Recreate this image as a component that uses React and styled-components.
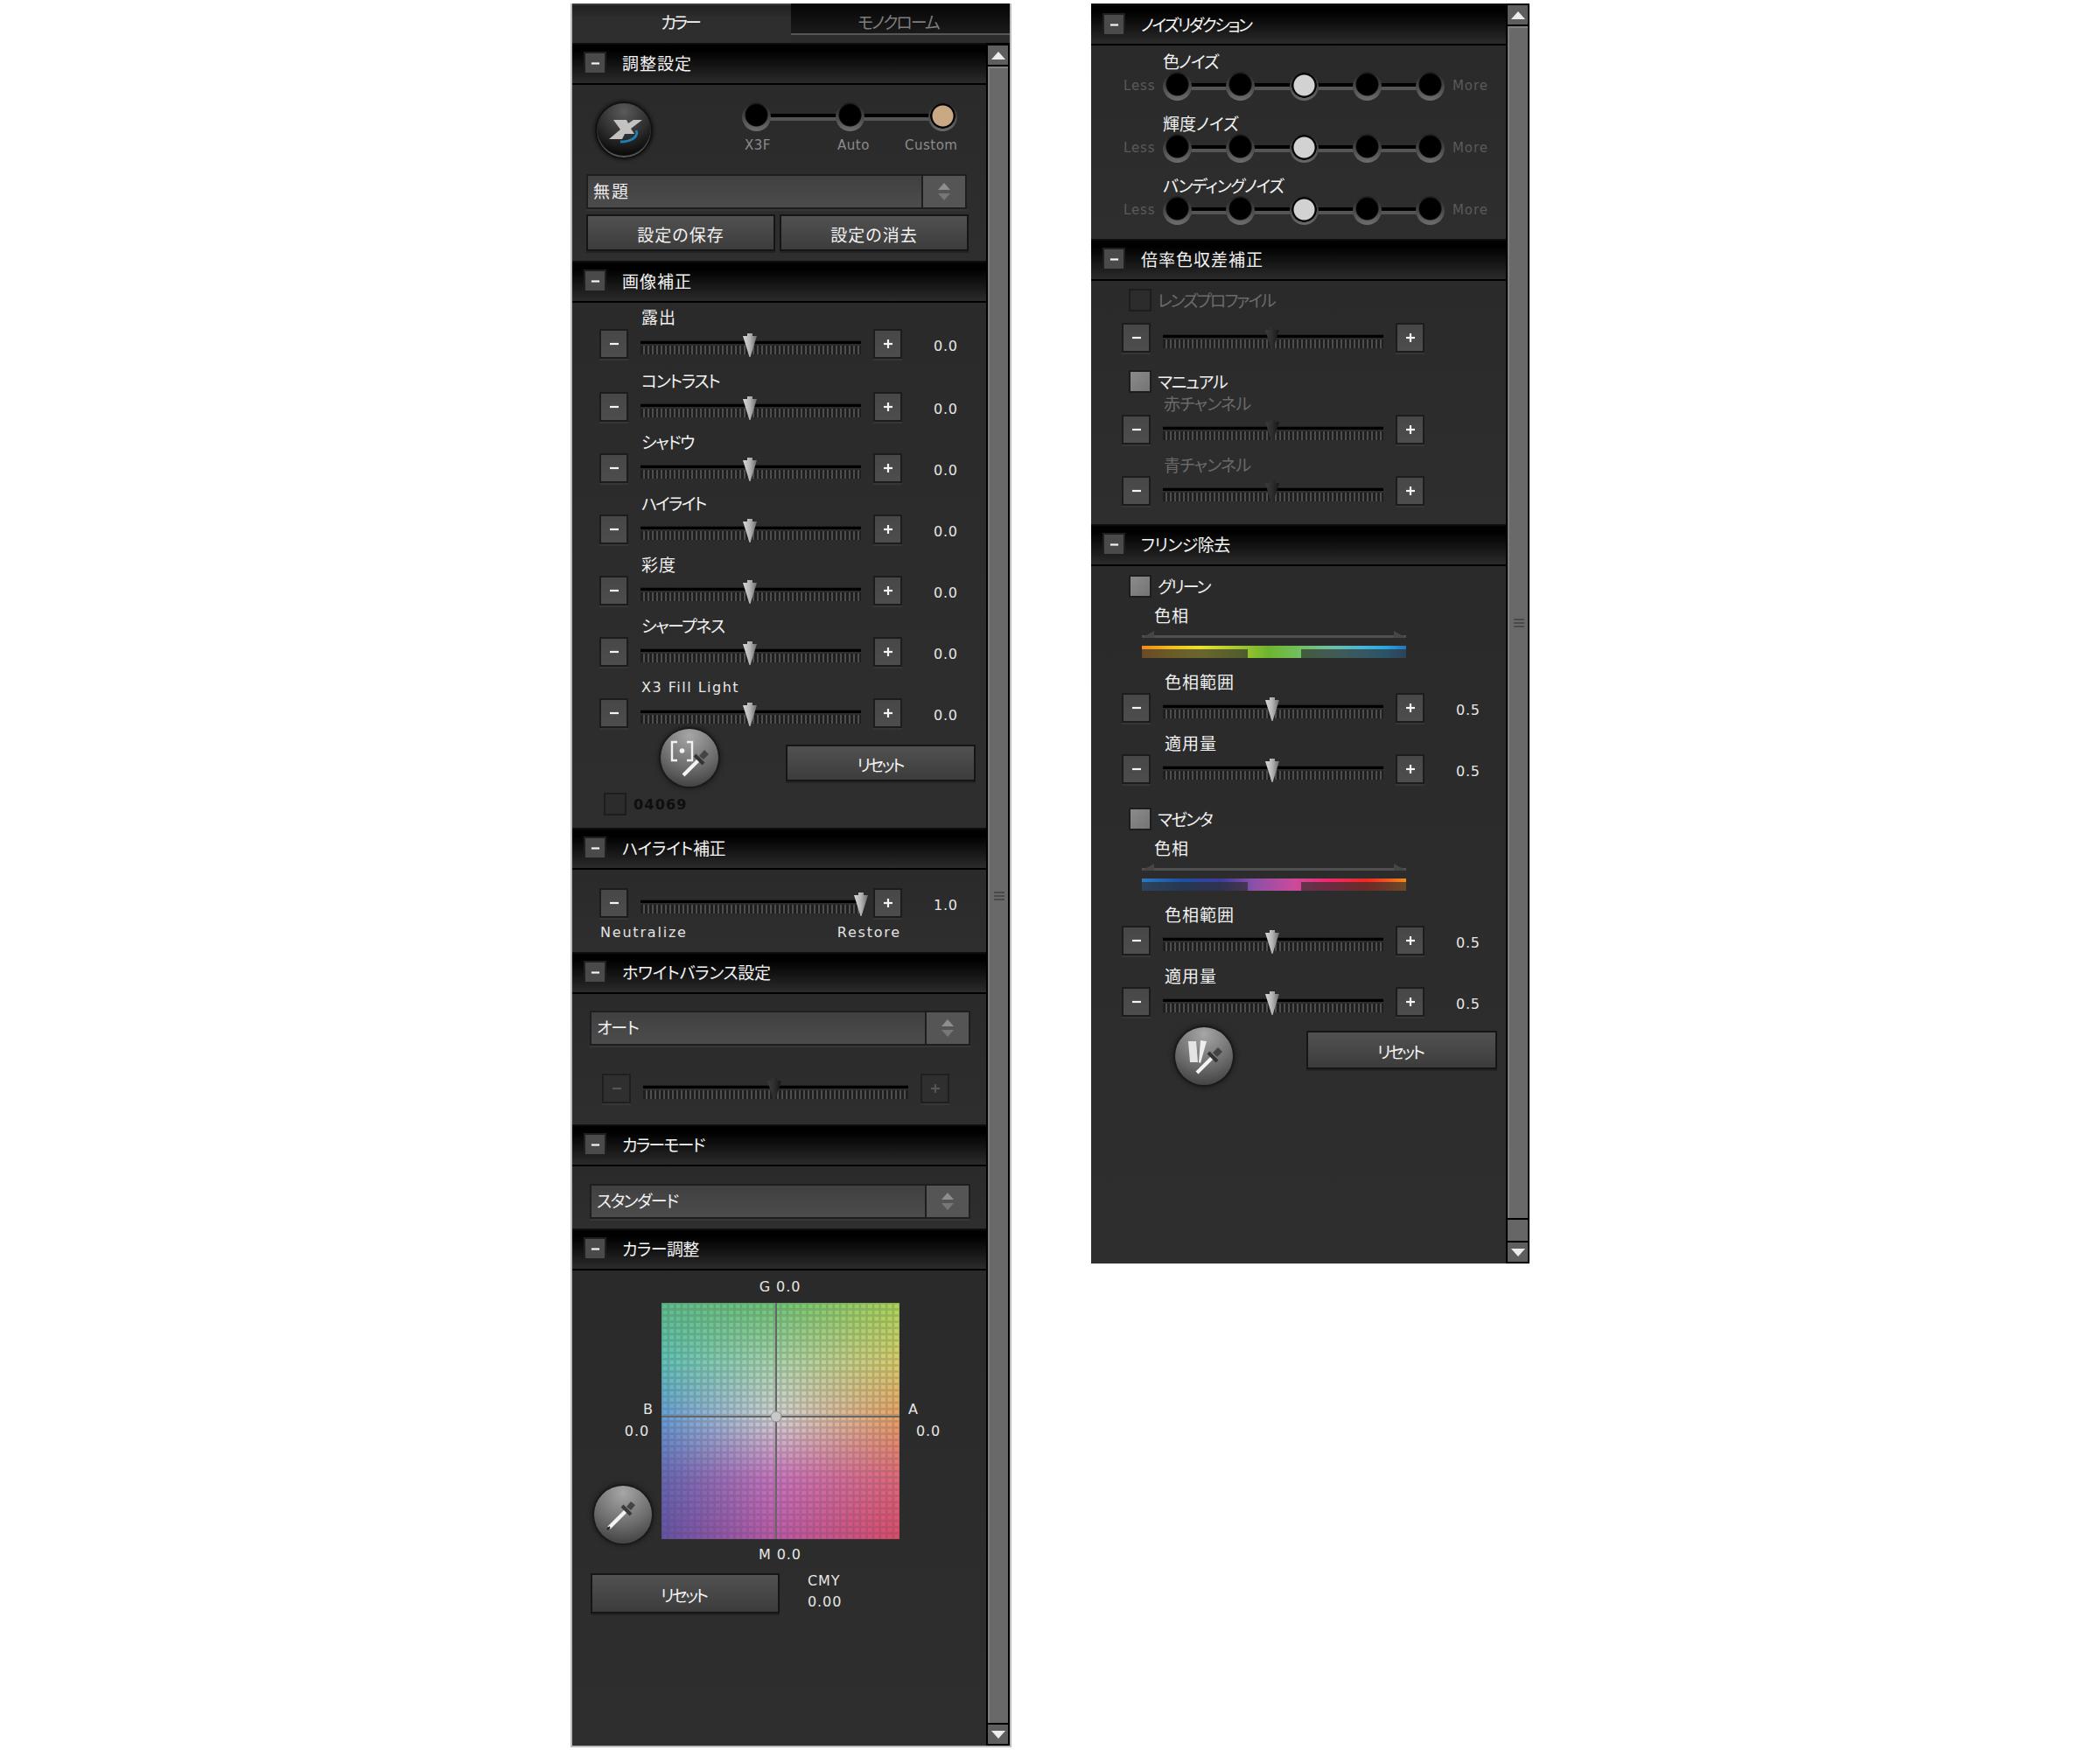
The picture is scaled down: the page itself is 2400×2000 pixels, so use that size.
import React, { useMemo } from "react";
import styled, { createGlobalStyle, css } from "styled-components";

const Global = createGlobalStyle`
  html, body { margin: 0; padding: 0; background: #fff; }
  body { font-family: "Noto Sans CJK JP", "DejaVu Sans", sans-serif; }
  * { box-sizing: border-box; }
`;

const Page = styled.div`
  display: flex;
  align-items: flex-start;
  gap: 91px;
  padding: 4px 0 0 652px;
  width: 2400px;
  height: 2000px;
`;
const LeftPanel = styled.div`
  width: 504px;
  height: 1993px;
  border: solid #bcbcbc;
  border-width: 0 2px 2px 2px;
  display: flex;
  flex-direction: column;
  background: #2c2c2c;
`;
const RightPanel = styled.div`
  width: 501px;
  height: 1440px;
  display: flex;
  background: #2c2d2c;
`;
const Tabs = styled.div`
  display: flex;
  height: 45px;
  flex: none;
`;
const Tab = styled.div`
  height: 45px;
  display: flex;
  align-items: flex-start;
  justify-content: center;
  font-size: 19px;
  line-height: 24px;
  padding-top: 9px;
  font-feature-settings: "palt";
  ${p => p.$active ? css`
    width: 250px;
    background: linear-gradient(#1f1f1f, #2e2e2e 35%);
    border-top: 2px solid #3a3a3a;
    color: #f2f2f2;
    padding-top: 7px;
    padding-right: 4px;
  ` : css`
    flex: 1;
    color: #7d7d7d;
    padding-right: 5px;
    background: linear-gradient(#050505 0, #1a1a1a 34px, #565656 34px, #565656 36px, #2c2c2c 36px);
  `}
  letter-spacing: ${p => p.$ls}px;
`;
const PanelBody = styled.div`
  flex: 1;
  display: flex;
  min-height: 0;
`;
const Main = styled.div`
  width: ${p => p.$w}px;
  flex: none;
  display: flex;
  flex-direction: column;
`;
const Scroll = styled.div`
  width: 27px;
  flex: none;
  background: #000;
  display: flex;
  flex-direction: column;
  padding: ${p => p.$top}px 2px 2px 2px;
  gap: 2px;
`;
const ScrollArrow = styled.div`
  height: 22px;
  flex: none;
  background: #5e5e5e;
  display: flex;
  align-items: center;
  justify-content: center;
`;
const ScrollThumb = styled.div`
  flex: 1;
  background: #696969;
  border-left: 2px solid #7e7e7e;
  border-top: 2px solid #828282;
  display: flex;
  align-items: center;
  justify-content: center;
`;
const Grip = styled.div`
  width: 12px;
  height: 10px;
  background: repeating-linear-gradient(#4a4a4a 0 2px, transparent 2px 4px);
`;
const ScrollTail = styled.div`
  height: 24px;
  flex: none;
  background: #666;
`;

const SectionHead = styled.div`
  height: 48px;
  flex: none;
  display: flex;
  align-items: center;
  padding-left: 13px;
  padding-top: ${p => p.$pt || 0}px;
  border-bottom: 2px solid #000;
  background: linear-gradient(#141414 0, #000 3px, #000 9px, #2b2b2b 100%);
`;
const Collapse = styled.div`
  width: 26px;
  height: 26px;
  flex: none;
  background: #4a4a4a;
  border: 2px solid #1f1f1f;
  display: flex;
  align-items: center;
  justify-content: center;
`;
const HeadTitle = styled.div`
  margin-left: 18px;
  color: #f4f4f4;
  font-size: 19px;
  line-height: 24px;
  font-feature-settings: "palt";
  white-space: nowrap;
  letter-spacing: ${p => p.$ls}px;
`;
const SectionBody = styled.div`
  height: ${p => p.$h ? p.$h + "px" : "auto"};
  ${p => !p.$h && "flex: 1;"}
  flex-shrink: 0;
  background: linear-gradient(#2a2a2a, #2e2e2e);
  display: flex;
  flex-direction: column;
  align-items: flex-start;
`;

const TopRow = styled.div`
  display: flex;
  padding: 19px 0 0 26px;
  height: 85px;
`;
const Knob = styled.div`
  width: 66px;
  height: 66px;
  border-radius: 50%;
  flex: none;
  background: radial-gradient(circle at 50% 15%, #5a5a5a, #2c2c2c 50%, #050505 85%);
  border: 2px solid #111;
  box-shadow: inset 0 -2px 1px #5c5c5c, 0 0 3px 2px #1d1d1d;
`;
const RadioWrap = styled.div`
  margin-left: 103px;
  padding-top: 2px;
  width: 260px;
`;
const DotTrack = styled.div`
  position: relative;
  display: flex;
  justify-content: space-between;
  width: ${p => p.$w}px;
  height: 31px;
  flex: none;
  &::before {
    content: "";
    position: absolute;
    left: 10px;
    right: 10px;
    top: 12px;
    height: 8px;
    background: linear-gradient(#000 0 4px, #555 4px);
  }
`;
const Dot = styled.div`
  position: relative;
  width: 33px;
  height: 33px;
  margin: -1px;
  flex: none;
  border-radius: 50%;
  background: ${p => p.$color
    ? `radial-gradient(circle at 50% 47%, ${p.$color} 0 11.5px, #050505 12.5px 14px, transparent 14.5px), linear-gradient(#262626, #6a6a6a)`
    : `radial-gradient(circle at 50% 44%, #000 0 11.5px, #0b0b0b 12.5px, transparent 13.5px), linear-gradient(#202020, #6e6e6e)`};
`;
const RadioLabels = styled.div`
  display: flex;
  margin: 8px 0 0 2px;
`;
const RadioLabel = styled.div`
  width: ${p => p.$w}px;
  font-family: "DejaVu Sans", sans-serif;
  font-size: 15px;
  line-height: 18px;
  color: #8b8b8b;
  letter-spacing: 0.5px;
`;

const SelectBox = styled.div`
  display: flex;
  margin: ${p => p.$mt}px 0 0 ${p => p.$x}px;
  width: 435px;
  height: 40px;
  flex: none;
  border: 2px solid #1e1e1e;
  box-shadow: 0 2px 0 #363636;
  background: #1e1e1e;
`;
const SelectText = styled.div`
  flex: 1;
  background: linear-gradient(#404040, #4c4c4c);
  color: #f0f0f0;
  font-size: 19px;
  line-height: 34px;
  padding-left: ${p => p.$pad}px;
  font-feature-settings: "palt";
  letter-spacing: ${p => p.$ls}px;
`;
const SelectArrow = styled.div`
  width: 48px;
  margin-left: 2px;
  background: #555;
  display: flex;
  align-items: center;
  justify-content: center;
`;
const ButtonRow = styled.div`
  display: flex;
  gap: 5px;
  margin: 6px 0 0 16px;
`;
const TextButton = styled.div`
  width: ${p => p.$w || 217}px;
  height: ${p => p.$h || 42}px;
  flex: none;
  margin-top: ${p => p.$mt || 0}px;
  border: 2px solid #151515;
  background: linear-gradient(#515151, #3c3c3c);
  box-shadow: 0 2px 0 #232323;
  color: #f2f2f2;
  font-size: 19px;
  font-feature-settings: "palt";
  letter-spacing: ${p => p.$ls}px;
  display: flex;
  align-items: center;
  justify-content: center;
  padding: 3px ${p => p.$pr || 0}px 0 0;
`;

const LabelRow = styled.div`
  height: ${p => p.$h}px;
  flex: none;
  display: flex;
  align-items: flex-end;
  padding: 0 0 ${p => p.$pb ?? 3}px ${p => p.$x}px;
  color: ${p => p.$dim ? "#6a6a6a" : "#f2f2f2"};
  font-size: 19px;
  line-height: 20px;
  font-feature-settings: "palt";
  white-space: nowrap;
  letter-spacing: ${p => p.$ls}px;
`;
const LatinLabel = styled.span`
  font-family: "DejaVu Sans", sans-serif;
  font-size: 16px;
  letter-spacing: 1.5px;
  color: #e8e8e8;
`;
const SliderRow = styled.div`
  display: flex;
  height: 34px;
  flex: none;
  padding-left: ${p => p.$x}px;
  margin-top: ${p => p.$mt || 0}px;
`;
const MiniBtn = styled.div`
  width: 33px;
  height: 34px;
  flex: none;
  background: linear-gradient(#474747, #4d4d4d);
  border: 2px solid ${p => p.$dim ? "#1f1f1f" : "#1c1c1c"};
  box-shadow: 0 2px 0 #363636;
  display: flex;
  align-items: center;
  justify-content: center;
  ${p => p.$dim && "background: #2f2f2f;"}
`;
const Track = styled.div`
  position: relative;
  width: ${p => p.$w || 252}px;
  height: 34px;
  margin: 0 14px;
  flex: none;
  &::before {
    content: "";
    position: absolute;
    left: 0; right: 0; top: 13px;
    height: 4px;
    background: linear-gradient(#1f1f1f 0 1px, #000 1px);
  }
  &::after {
    content: "";
    position: absolute;
    left: 0; right: 0; top: 19px;
    height: 10px;
    background: repeating-linear-gradient(90deg, #1f1f1f 0 3px, #4e4e4e 3px 5px);
  }
`;
const ThumbWrap = styled.div`
  position: absolute;
  top: 5px;
  width: 16px;
  height: 27px;
  margin-left: -8px;
  z-index: 2;
`;
const Value = styled.div`
  margin: 6px 0 0 36px;
  font-family: "DejaVu Sans", sans-serif;
  font-size: 16px;
  line-height: 28px;
  letter-spacing: 0.8px;
  color: #e6e6e6;
`;
const FootRow = styled.div`
  display: flex;
  padding-left: ${p => p.$x}px;
  margin-top: ${p => p.$mt}px;
  gap: ${p => p.$gap}px;
`;
const RoundBtn = styled.div`
  width: 66px;
  height: 66px;
  flex: none;
  border-radius: 50%;
  background: radial-gradient(circle at 50% 12%, #a6a6a6, #6c6c6c 55%, #3a3a3a 95%);
  box-shadow: 0 0 0 2px #1a1a1a, 0 0 5px 3px #1d1d1d;
`;
const CheckRow = styled.div`
  display: flex;
  align-items: center;
  margin: ${p => p.$mt}px 0 0 ${p => p.$x}px;
  height: 26px;
  flex: none;
  font-size: 19px;
  line-height: 26px;
  font-feature-settings: "palt";
  color: ${p => p.$dim ? "#6a6a6a" : "#f0f0f0"};
  letter-spacing: ${p => p.$ls}px;
  white-space: nowrap;
`;
const CheckBox = styled.div`
  width: 26px;
  height: 26px;
  flex: none;
  margin-right: ${p => p.$gap || 7}px;
  border: 2px solid #1d1d1d;
  background: ${p => p.$on ? "linear-gradient(135deg,#8a8a8a,#747474)" : "#2c2c2c"};
`;
const CodeText = styled.div`
  font-family: "DejaVu Sans", sans-serif;
  font-weight: 700;
  font-size: 16px;
  letter-spacing: 1.2px;
  color: #0e0e0e;
  padding-top: 2px;
`;
const Neutral = styled.div`
  display: flex;
  margin: 7px 0 0 32px;
  width: 344px;
  justify-content: space-between;
  font-family: "DejaVu Sans", sans-serif;
  font-size: 16px;
  line-height: 20px;
  letter-spacing: 1.8px;
  color: #e2e2e2;
`;
const NoiseRow = styled.div`
  display: flex;
  height: 31px;
  flex: none;
  padding-left: 37px;
`;
const Faint = styled.div`
  width: ${p => p.$w}px;
  margin-left: ${p => p.$ml || 0}px;
  flex: none;
  font-family: "DejaVu Sans", sans-serif;
  font-size: 15px;
  line-height: 31px;
  color: #5a5a5a;
  letter-spacing: 0.9px;
`;

const ColorArea = styled.div`
  display: grid;
  grid-template-columns: 102px 272px 98px;
  grid-template-rows: 20px 270px 20px;
  margin-top: 9px;
`;
const AxisText = styled.div`
  font-family: "DejaVu Sans", sans-serif;
  font-size: 16px;
  line-height: 20px;
  letter-spacing: 0.9px;
  color: #e6e6e6;
  white-space: nowrap;
  text-align: ${p => p.$align || "left"};
  padding-left: ${p => p.$pl || 0}px;
  padding-right: ${p => p.$pr || 0}px;
  margin-top: ${p => p.$mt || 0}px;
`;
const GridTop = styled(AxisText)`
  grid-column: 2;
  text-align: center;
  padding-right: 1px;
  margin-top: 0;
`;
const SideCell = styled.div`
  height: 270px;
  padding-top: 110px;
  grid-row: 2;
  margin-top: 10px;
`;
const GridSvg = styled.svg`
  grid-column: 2;
  grid-row: 2;
  display: block;
  margin-top: 8px;
`;
const GridBottom = styled(AxisText)`
  grid-column: 2;
  grid-row: 3;
  text-align: center;
  padding-right: 1px;
  margin-top: 16px;
`;
const DropWrap = styled.div`
  margin: 52px 0 0 25px;
  width: 66px;
`;
const CmyRow = styled.div`
  display: flex;
  margin: 27px 0 0 21px;
  gap: 32px;
`;
const CmyCol = styled.div`
  display: flex;
  flex-direction: column;
  gap: 4px;
  margin-top: -1px;
`;
const NameText = styled.div`
  margin-left: ${p => p.$x}px;
  margin-top: ${p => p.$mt}px;
  height: 20px;
  flex: none;
  font-size: 19px;
  line-height: 20px;
  letter-spacing: 1px;
  color: #f2f2f2;
`;
const Rail = styled.div`
  width: 302px;
  height: 10px;
  margin: 7px 0 0 58px;
  flex: none;
  svg { display: block; }
`;
const HueBar = styled.div`
  position: relative;
  width: 302px;
  height: 14px;
  margin: 8px 0 0 58px;
  flex: none;
  background: ${p => p.$bg};
`;
const HueDim = styled.div`
  position: absolute;
  top: 4px;
  bottom: 0;
  ${p => p.$left ? "left: 0; width: 121px;" : "right: 0; width: 120px;"}
  background: rgba(44, 44, 44, 0.68);
`;

/* ---------- drawings ---------- */
const Sign = ({ plus, color = "#f4f4f4", size = 12, w = 2.2 }) => (
  <svg width={size} height={size} viewBox="0 0 12 12">
    <path d="M1 6H11" stroke={color} strokeWidth={w} />
    {plus && <path d="M6 1V11" stroke={color} strokeWidth={w} />}
  </svg>
);
const UpDown = () => (
  <svg width="16" height="22" viewBox="0 0 16 22">
    <path d="M8 1L15 9H1Z" fill="#8e8e8e" />
    <path d="M8 21L15 13H1Z" fill="#777" />
  </svg>
);
const Tri = ({ up }) => (
  <svg width="16" height="9" viewBox="0 0 16 9">
    <path d={up ? "M8 0L16 9H0Z" : "M8 9L16 0H0Z"} fill="#ececec" />
  </svg>
);
const Thumb = ({ dim }) => (
  <svg width="16" height="27" viewBox="0 0 16 27">
    <defs>
      <linearGradient id={dim ? "thd" : "thl"} x1="0" x2="1" y1="0" y2="0">
        <stop offset="0" stopColor={dim ? "#3c3c3c" : "#d8d8d8"} />
        <stop offset="0.5" stopColor={dim ? "#2d2d2d" : "#b4b4b4"} />
        <stop offset="1" stopColor={dim ? "#161616" : "#6a6a6a"} />
      </linearGradient>
    </defs>
    <path d="M5 0H11V3H16L8.5 27H7.5L0 3H5Z" fill={dim ? "url(#thd)" : "url(#thl)"} />
  </svg>
);
const X3Logo = () => (
  <svg width="62" height="62" viewBox="0 0 62 62">
    <path d="M19 19H34L36 23L42 19H52L39 29L43 35H32L29 41H14L27 30Z" fill="#c2c2c2" />
    <path d="M45 31C48 38 40 44 27 44" stroke="#1f7fb6" strokeWidth="2.8" fill="none" />
  </svg>
);
const DropperIcon = () => (
  <svg width="66" height="66" viewBox="0 0 66 66">
    <path d="M17 48L37 28" stroke="#f4f4f4" strokeWidth="4.5" />
    <path d="M15 50L18 47" stroke="#222" strokeWidth="2" />
    <path d="M32 23L42 33" stroke="#3a3a3a" strokeWidth="4" />
    <path d="M37 24L42 18L47 22L42 28Z" fill="#444" />
  </svg>
);
const PointIcon = () => (
  <svg width="66" height="66" viewBox="0 0 66 66">
    <path d="M19 15H13V36H19M30 15H36V36H30" stroke="#f2f2f2" strokeWidth="2.4" fill="none" />
    <circle cx="24.5" cy="25" r="2.8" fill="#f2f2f2" />
    <path d="M26 53L44 35" stroke="#f4f4f4" strokeWidth="4" />
    <path d="M39 30L49 40" stroke="#333" strokeWidth="4" />
    <path d="M44 31L50 24L55 29L49 35Z" fill="#444" />
  </svg>
);
const BarsIcon = () => (
  <svg width="66" height="66" viewBox="0 0 66 66">
    <path d="M15 16H24L26 40H17Z" fill="#e4e4e4" />
    <path d="M29 15L36 16L29 41L27 40Z" fill="#efefef" />
    <path d="M25 52L43 34" stroke="#f4f4f4" strokeWidth="4" />
    <path d="M38 29L48 39" stroke="#333" strokeWidth="4" />
    <path d="M43 29L49 23L54 28L48 34Z" fill="#444" />
  </svg>
);
const RailShape = () => (
  <svg width="302" height="10" viewBox="0 0 302 10">
    <rect x="0" y="6" width="302" height="3" fill="#505050" />
    <path d="M0 9L14 1V9ZM288 1L302 9H288Z" fill="#464646" />
  </svg>
);

const MIX = (a, b, t) => a.map((v, i) => v + (b[i] - v) * t);
const hex = h => [parseInt(h.slice(0, 2), 16), parseInt(h.slice(2, 4), 16), parseInt(h.slice(4, 6), 16)];
const COLORS = [
  ["54b983", "64c06c", "a4d24e"],
  ["55c1b2", "a3d3a6", "d6cb62"],
  ["5c98d6", "d2d2d2", "e89c5a"],
  ["5e5eb2", "c86cbc", "e05f72"],
  ["5b47a3", "b94fa3", "dc4062"],
].map(r => r.map(hex));
function colorAt(x, y) {
  const cx = 131, cy = 130;
  const u = x < cx ? x / cx : (x - cx) / (272 - cx);
  const v4 = y < cy ? (y / cy) * 2 : 2 + ((y - cy) / (270 - cy)) * 2;
  const j = Math.min(3, Math.floor(v4));
  const v = v4 - j;
  const i = x < cx ? 0 : 1;
  const top = MIX(COLORS[j][i], COLORS[j][i + 1], u);
  const bot = MIX(COLORS[j + 1][i], COLORS[j + 1][i + 1], u);
  return MIX(top, bot, v);
}
const rgb = c => `rgb(${c.map(Math.round).join(",")})`;
const ColorGrid = () => {
  const cells = useMemo(() => {
    const out = [];
    const px = 272 / 36;
    const py = 270 / 38;
    for (let r = 0; r < 38; r++) {
      for (let c = 0; c < 36; c++) {
        const col = colorAt(c * px + px / 2, r * py + py / 2);
        out.push(
          <rect key={`b${r}-${c}`} x={c * px} y={r * py} width={px + 0.5} height={py + 0.5}
            fill={rgb(MIX(col, [100, 100, 100], 0.26))} shapeRendering="crispEdges" />,
          <rect key={`f${r}-${c}`} x={c * px + 1.6} y={r * py + 1.6} width={px - 2.6} height={py - 2.6}
            fill={rgb(MIX(col, [255, 255, 255], 0.05))} />
        );
      }
    }
    return out;
  }, []);
  return (
    <GridSvg width="272" height="270" viewBox="0 0 272 270">
      {cells}
      <rect x="130" y="0" width="2" height="270" fill="#666" />
      <rect x="0" y="129" width="272" height="2" fill="#666" />
      <circle cx="131" cy="130" r="6" fill="#c8c8c8" stroke="#8c8c8c" strokeWidth="1" />
    </GridSvg>
  );
};

/* ---------- parts ---------- */
const Section = ({ title, ls, h, pt, children }) => (
  <>
    <SectionHead $pt={pt}>
      <Collapse><Sign size={11} w={2.4} /></Collapse>
      <HeadTitle $ls={ls}>{title}</HeadTitle>
    </SectionHead>
    <SectionBody $h={h}>{children}</SectionBody>
  </>
);
const Select = ({ text, ls, x, mt, pad = 6 }) => (
  <SelectBox $x={x} $mt={mt}>
    <SelectText $ls={ls} $pad={pad}>{text}</SelectText>
    <SelectArrow><UpDown /></SelectArrow>
  </SelectBox>
);
const Slider = ({ x, value, pos = 49.5, dim, w, mt, dimIcons }) => (
  <SliderRow $x={x} $mt={mt}>
    <MiniBtn $dim={dimIcons}><Sign color={dimIcons ? "#555" : "#f4f4f4"} /></MiniBtn>
    <Track $w={w}>
      <ThumbWrap style={{ left: `${pos}%` }}><Thumb dim={dim} /></ThumbWrap>
    </Track>
    <MiniBtn $dim={dimIcons}><Sign plus color={dimIcons ? "#555" : "#f4f4f4"} /></MiniBtn>
    {value && <Value>{value}</Value>}
  </SliderRow>
);
const Labeled = ({ label, ls, h = 36, x = 79, value, latin, dim, thumbDim, sx = 31, pb }) => (
  <>
    <LabelRow $h={h} $x={x} $ls={ls} $dim={dim} $pb={pb}>
      {latin ? <LatinLabel>{label}</LatinLabel> : label}
    </LabelRow>
    <Slider x={sx} value={value} dim={thumbDim} />
  </>
);
const Dots = ({ w, n = 5, active }) => (
  <DotTrack $w={w}>
    {Array.from({ length: n }).map((_, i) => (
      <Dot key={i} $color={i === active ? (n === 3 ? "#c9a984" : "#d2d2d2") : null} />
    ))}
  </DotTrack>
);
const Noise = ({ label, ls, h }) => (
  <>
    <LabelRow $h={h} $x={82} $ls={ls} $pb={3}>{label}</LabelRow>
    <NoiseRow>
      <Faint $w={46}>Less</Faint>
      <Dots w={320} active={2} />
      <Faint $w={54} $ml={10}>More</Faint>
    </NoiseRow>
  </>
);
const HUE_G = "linear-gradient(90deg,#f08a1c,#f0c020 12%,#ece030 22%,#a8c830 36%,#6db52f 48%,#72c060 60%,#6fbfa8 72%,#48b4d8 84%,#2aa8e0 92%,#2a72b8)";
const HUE_M = "linear-gradient(90deg,#2a7abf,#1c50a0 15%,#3c3c9c 30%,#8a50a8 42%,#cc4a9a 58%,#ee2a70 70%,#ee2a20 85%,#ef5020 92%,#f08a1c)";
const Hue = ({ bg }) => (
  <>
    <Rail><RailShape /></Rail>
    <HueBar $bg={bg}>
      <HueDim $left />
      <HueDim />
    </HueBar>
  </>
);

export default function App() {
  return (
    <>
      <Global />
      <Page>
        <LeftPanel>
          <Tabs>
            <Tab $active $ls={-3}>カラー</Tab>
            <Tab $ls={-2}>モノクローム</Tab>
          </Tabs>
          <PanelBody>
            <Main $w={473}>
              <Section title="調整設定" ls={1} h={201}>
                <TopRow>
                  <Knob><X3Logo /></Knob>
                  <RadioWrap>
                    <Dots w={244} n={3} active={2} />
                    <RadioLabels>
                      <RadioLabel $w={106}>X3F</RadioLabel>
                      <RadioLabel $w={77}>Auto</RadioLabel>
                      <RadioLabel $w={70}>Custom</RadioLabel>
                    </RadioLabels>
                  </RadioWrap>
                </TopRow>
                <Select text="無題" ls={2} x={16} mt={17} pad={6} />
                <ButtonRow>
                  <TextButton $w={216} $ls={1}>設定の保存</TextButton>
                  <TextButton $w={216} $ls={1}>設定の消去</TextButton>
                </ButtonRow>
              </Section>
              <Section title="画像補正" ls={1} h={600}>
                <Labeled label="露出" ls={1} h={30} value="0.0" pb={4} />
                <Labeled label="コントラスト" ls={-1.3} h={38} value="0.0" />
                <Labeled label="シャドウ" ls={-1.3} value="0.0" />
                <Labeled label="ハイライト" ls={-1.8} value="0.0" />
                <Labeled label="彩度" ls={1} value="0.0" />
                <Labeled label="シャープネス" ls={-1.5} value="0.0" />
                <Labeled label="X3 Fill Light" latin value="0.0" pb={2} />
                <FootRow $x={101} $mt={1} $gap={77}>
                  <RoundBtn><PointIcon /></RoundBtn>
                  <TextButton $mt={18} $ls={-2.7} $pr={2}>リセット</TextButton>
                </FootRow>
                <CheckRow $x={36} $mt={7}>
                  <CheckBox $gap={8} />
                  <CodeText>04069</CodeText>
                </CheckRow>
              </Section>
              <Section title="ハイライト補正" ls={-0.3} h={94}>
                <Slider x={31} value="1.0" pos={100} mt={21} />
                <Neutral><span>Neutralize</span><span>Restore</span></Neutral>
              </Section>
              <Section title="ホワイトバランス設定" ls={-0.3} h={149}>
                <Select text="オート" ls={-1} x={20} mt={19} />
                <Slider x={34} w={303} pos={49.5} dim dimIcons mt={32} />
              </Section>
              <Section title="カラーモード" ls={-1.8} h={71}>
                <Select text="スタンダード" ls={-1.5} x={20} mt={20} />
              </Section>
              <Section title="カラー調整" ls={-0.6}>
                <ColorArea>
                  <GridTop>G 0.0</GridTop>
                  <SideCell>
                    <AxisText $align="right" $pr={9}>B</AxisText>
                    <AxisText $align="right" $pr={14} $mt={5}>0.0</AxisText>
                    <DropWrap><RoundBtn><DropperIcon /></RoundBtn></DropWrap>
                  </SideCell>
                  <ColorGrid />
                  <SideCell>
                    <AxisText $pl={10}>A</AxisText>
                    <AxisText $pl={19} $mt={5}>0.0</AxisText>
                  </SideCell>
                  <GridBottom>M 0.0</GridBottom>
                </ColorArea>
                <CmyRow>
                  <TextButton $h={46} $w={216} $ls={-2.7} $pr={4}>リセット</TextButton>
                  <CmyCol>
                    <AxisText>CMY</AxisText>
                    <AxisText>0.00</AxisText>
                  </CmyCol>
                </CmyRow>
              </Section>
            </Main>
            <Scroll $top={3}>
              <ScrollArrow><Tri up /></ScrollArrow>
              <ScrollThumb><Grip /></ScrollThumb>
              <ScrollArrow><Tri /></ScrollArrow>
            </Scroll>
          </PanelBody>
        </LeftPanel>

        <RightPanel>
          <Main $w={474}>
            <Section title="ノイズリダクション" ls={-2.4} h={221} pt={2}>
              <Noise label="色ノイズ" ls={-1} h={31} />
              <Noise label="輝度ノイズ" ls={0} h={40} />
              <Noise label="バンディングノイズ" ls={-1.3} h={40} />
            </Section>
            <Section title="倍率色収差補正" ls={1} h={278}>
              <CheckRow $x={43} $mt={9} $dim $ls={-2.1}>
                <CheckBox />レンズプロファイル
              </CheckRow>
              <Slider x={35} dim mt={13} />
              <CheckRow $x={43} $mt={20} $ls={-1.2}>
                <CheckBox $on />マニュアル
              </CheckRow>
              <Labeled label="赤チャンネル" ls={-0.8} h={25} x={83} dim thumbDim sx={35} />
              <Labeled label="青チャンネル" ls={-0.8} x={83} dim thumbDim sx={35} />
            </Section>
            <Section title="フリンジ除去" ls={-0.5}>
              <CheckRow $x={43} $mt={10} $ls={-2}>
                <CheckBox $on />グリーン
              </CheckRow>
              <NameText $x={72} $mt={10}>色相</NameText>
              <Hue bg={HUE_G} />
              <Labeled label="色相範囲" ls={1} h={40} x={84} value="0.5" sx={35} />
              <Labeled label="適用量" ls={1} x={84} value="0.5" sx={35} />
              <CheckRow $x={43} $mt={27} $ls={-1.7}>
                <CheckBox $on />マゼンタ
              </CheckRow>
              <NameText $x={72} $mt={10}>色相</NameText>
              <Hue bg={HUE_M} />
              <Labeled label="色相範囲" ls={1} h={40} x={84} value="0.5" sx={35} />
              <Labeled label="適用量" ls={1} x={84} value="0.5" sx={35} />
              <FootRow $x={96} $mt={12} $gap={84}>
                <RoundBtn><BarsIcon /></RoundBtn>
                <TextButton $mt={4} $h={44} $w={218} $ls={-2.7} $pr={4}>リセット</TextButton>
              </FootRow>
            </Section>
          </Main>
          <Scroll $top={2}>
            <ScrollArrow><Tri up /></ScrollArrow>
            <ScrollThumb><Grip /></ScrollThumb>
            <ScrollTail />
            <ScrollArrow><Tri /></ScrollArrow>
          </Scroll>
        </RightPanel>
      </Page>
    </>
  );
}
